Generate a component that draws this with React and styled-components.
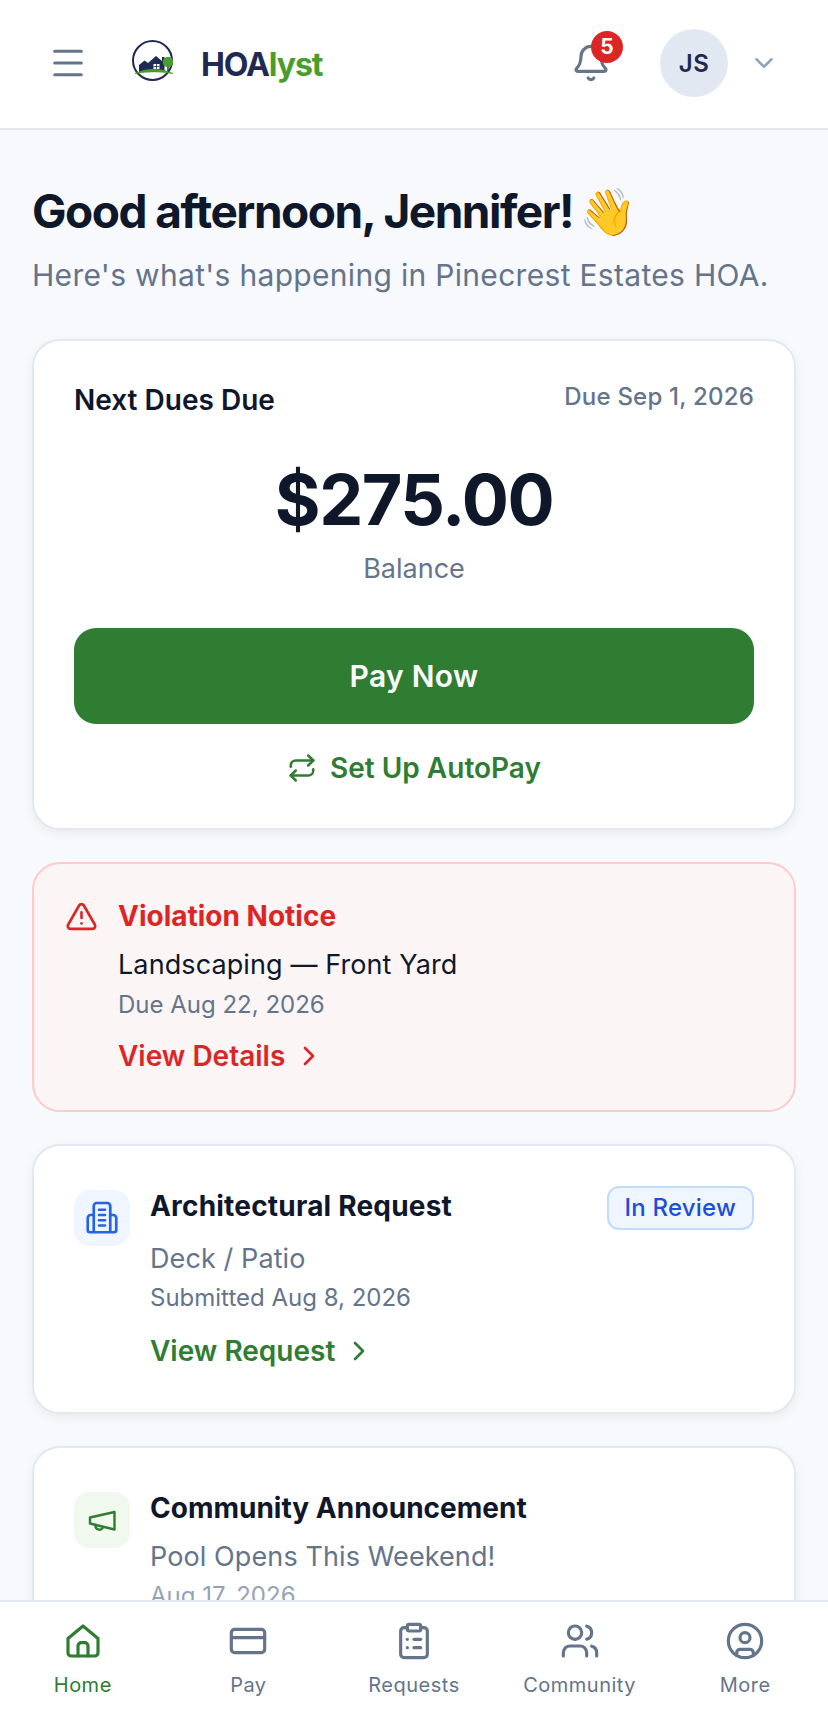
import React from 'react';
import styled, { createGlobalStyle } from 'styled-components';
import { Menu, Bell, ChevronDown, ChevronRight, Repeat, TriangleAlert, CreditCard, ClipboardList, Users, CircleUser } from 'lucide-react';

const navy = '#1e2a52';
const ink = '#0f172a';
const slate = '#64748b';
const green = '#2e7d32';
const red = '#dc2626';

const GlobalStyle = createGlobalStyle`
  html, body { margin: 0; padding: 0; height: 100%; }
  body { font-family: Inter, "Noto Sans", sans-serif; background: #f8f9fc; color: ${ink}; }
  * { box-sizing: border-box; }
`;

const Screen = styled.div`
  display: flex;
  flex-direction: column;
  height: 1720px;
  overflow: hidden;
`;

const Header = styled.header`
  flex: none;
  display: flex;
  align-items: center;
  height: 130px;
  padding: 0 49px 2px 48px;
  background: #fff;
  border-bottom: 2px solid #e2e8f0;
  color: ${slate};
`;

const LogoMark = styled.svg`
  width: 44px;
  height: 44px;
  margin-left: 42px;
  margin-top: -4px;
`;

const Brand = styled.div`
  margin-left: 27px;
  margin-top: 2px;
  font-size: 32px;
  font-weight: 700;
  letter-spacing: -1.1px;
  color: ${navy};
  span { color: #4a9d2a; }
`;

const Spacer = styled.div`
  flex: 1;
`;

const BellWrap = styled.div`
  position: relative;
  display: flex;
  margin-right: 49px;
`;

const Badge = styled.div`
  position: absolute;
  top: -12px;
  right: -12px;
  width: 32px;
  height: 32px;
  border-radius: 50%;
  background: ${red};
  color: #fff;
  font-size: 21px;
  font-weight: 700;
  line-height: 32px;
  text-align: center;
`;

const Avatar = styled.div`
  display: flex;
  align-items: center;
  justify-content: center;
  width: 68px;
  height: 68px;
  border-radius: 50%;
  background: #e2e8f2;
  color: ${navy};
  font-size: 24px;
  font-weight: 600;
  letter-spacing: 0.5px;
`;

const Caret = styled(ChevronDown)`
  margin-left: 21px;
  color: #94a3b8;
`;

const Main = styled.main`
  flex: 1;
  min-height: 0;
  overflow: hidden;
  padding: 53px 32px 0;
`;

const Greeting = styled.h1`
  display: flex;
  align-items: center;
  margin: 0;
  font-size: 46px;
  font-weight: 700;
  line-height: 56px;
  letter-spacing: -1.5px;
  color: ${ink};
`;

const Wave = styled.span`
  margin-left: 6px;
  font-size: 46px;
  letter-spacing: 0;
`;

const Subtitle = styled.p`
  margin: 16px 0 44px;
  font-size: 30px;
  line-height: 40px;
  letter-spacing: 0.31px;
  color: ${slate};
`;

const Stack = styled.div`
  display: flex;
  flex-direction: column;
  gap: 32px;
`;

const Card = styled.section`
  display: ${p => (p.$row ? 'flex' : 'block')};
  padding: ${p => (p.$row ? 41 : 40)}px 40px ${p => p.$bottom || 40}px;
  background: #fff;
  border: 2px solid #e2e8f0;
  border-radius: 28px;
  box-shadow: 0 4px 12px rgba(15, 23, 42, 0.06);
`;

const DuesTop = styled.div`
  display: flex;
  justify-content: space-between;
  align-items: flex-start;
`;

const DuesLabel = styled.div`
  font-size: 28px;
  font-weight: 600;
  line-height: 38px;
`;

const DuesDate = styled.div`
  font-size: 24px;
  font-weight: 500;
  line-height: 32px;
  letter-spacing: 0.2px;
  color: ${slate};
`;

const Amount = styled.div`
  margin-top: 38px;
  font-size: 70px;
  font-weight: 700;
  line-height: 86px;
  letter-spacing: -1.5px;
  text-align: center;
`;

const AmountNote = styled.div`
  margin-top: 9px;
  font-size: 27px;
  line-height: 34px;
  text-align: center;
  color: ${slate};
`;

const PayButton = styled.button`
  display: block;
  width: 100%;
  height: 96px;
  margin-top: 42px;
  border: 0;
  border-radius: 22px;
  background: ${green};
  color: #fff;
  font-family: inherit;
  font-size: 30px;
  font-weight: 600;
  letter-spacing: 0.3px;
`;

const AutoPay = styled.div`
  display: flex;
  align-items: center;
  justify-content: center;
  gap: 13px;
  margin-top: 24px;
  font-size: 28px;
  font-weight: 600;
  line-height: 40px;
  color: ${green};
`;

const Alert = styled.section`
  display: flex;
  gap: 20px;
  padding: 33px 31px 35px;
  background: #fcf5f6;
  border: 2px solid #fecaca;
  border-radius: 28px;
`;

const AlertIcon = styled(TriangleAlert)`
  flex: none;
  margin-top: 3px;
  color: ${red};
`;

const Body = styled.div`
  flex: 1;
  min-width: 0;
`;

const TitleRow = styled.div`
  display: flex;
  justify-content: space-between;
  align-items: flex-start;
`;

const Title = styled.div`
  font-size: 28px;
  font-weight: 700;
  line-height: 38px;
  letter-spacing: ${p => p.$track || 0}px;
  color: ${p => p.$color || ink};
`;

const Primary = styled.div`
  margin-top: ${p => p.$top}px;
  font-size: 27px;
  line-height: 38px;
  letter-spacing: 0.1px;
  color: ${p => p.$color || slate};
`;

const Meta = styled.div`
  margin-top: ${p => p.$top || 5}px;
  font-size: 24px;
  line-height: 30px;
  color: ${p => p.$color || slate};
`;

const ActionLink = styled.div`
  display: flex;
  align-items: center;
  gap: 8px;
  margin-top: ${p => p.$top || 19}px;
  font-size: 28px;
  font-weight: 600;
  line-height: 38px;
  color: ${p => p.$color};
`;

const IconBox = styled.div`
  flex: none;
  display: flex;
  align-items: center;
  justify-content: center;
  width: 56px;
  height: 56px;
  margin: 3px 20px 0 0;
  border-radius: 16px;
  background: ${p => p.$bg};
  color: ${p => p.$color};
`;

const StatusBadge = styled.div`
  margin: -1px 0 -5px;
  padding: 0 16px;
  height: 44px;
  border: 2px solid #bfdbfe;
  border-radius: 12px;
  background: #eff6ff;
  color: #1d4ed8;
  font-size: 24px;
  font-weight: 500;
  line-height: 40px;
  letter-spacing: 0.2px;
`;

const BottomNav = styled.nav`
  flex: none;
  display: grid;
  grid-template-columns: repeat(5, 1fr);
  height: 120px;
  padding-top: 19px;
  background: #fff;
  border-top: 2px solid #e2e8f0;
`;

const NavItem = styled.div`
  display: flex;
  flex-direction: column;
  align-items: center;
  gap: 11px;
  font-size: 20px;
  font-weight: 400;
  line-height: 26px;
  letter-spacing: 0.5px;
  color: ${p => (p.$active ? green : slate)};
`;

function Logo() {
  return (
    <LogoMark viewBox="0 0 44 44">
      <circle cx="22.5" cy="21.5" r="19.5" fill="none" stroke={navy} strokeWidth="2" />
      <path d="M9 33V26l5.500-4.500L18 24l8-7 6 5v-4h2.500v15z" fill={navy} />
      <rect x="23.5" y="25" width="6" height="5" fill="#fff" />
      <path d="M26.500 25v5M23.500 27.500h6" stroke={navy} strokeWidth="0.8" />
      <path d="M38 26v7" stroke={navy} strokeWidth="1.4" />
      <circle cx="38" cy="23" r="5.200" fill="#4a9d2a" />
      <path d="M5 34.500Q24 26 43 34.500 24 31 5 34.500z" fill="#4a9d2a" stroke="#4a9d2a" strokeWidth="0.8" strokeLinejoin="round" />
    </LogoMark>
  );
}

function HouseIcon() {
  return (
    <svg width="40" height="40" viewBox="0 0 24 24" fill="none" stroke="currentColor" strokeWidth="1.9" strokeLinecap="round" strokeLinejoin="round">
      <path d="M3 10.500 12 3l9 7.500V19a2 2 0 0 1-2 2H5a2 2 0 0 1-2-2z" />
      <path d="M9 21v-6a2 2 0 0 1 2-2h2a2 2 0 0 1 2 2v6" />
    </svg>
  );
}

function BuildingIcon() {
  return (
    <svg width="36" height="36" viewBox="0 0 24 24" fill="none" stroke="currentColor" strokeWidth="1.8" strokeLinecap="round" strokeLinejoin="round">
      <path d="M6.500 20.500V4a2 2 0 0 1 2-2h7a2 2 0 0 1 2 2v16.500" />
      <path d="M6.500 10H4.500A2 2 0 0 0 2.500 12v8a1.500 1.500 0 0 0 1.500 1.500h16a1.500 1.500 0 0 0 1.500-1.500v-8a2 2 0 0 0-2-2h-2" />
      <path d="M10 6.500h4M10 10h4M10 13.500h4M10 17h4" />
    </svg>
  );
}

function MegaphoneIcon() {
  return (
    <svg width="32" height="32" viewBox="0 0 32 32" fill="none" stroke="currentColor" strokeWidth="2.4" strokeLinecap="round" strokeLinejoin="round">
      <path d="M4 13.500 28.500 8v17.500L4 19.500z" />
      <path d="M9.500 21a4 4 0 0 0 7.500 2.500" />
    </svg>
  );
}

const navItems = [
  { label: 'Home', icon: <HouseIcon />, active: true },
  { label: 'Pay', icon: <CreditCard size={40} strokeWidth={1.9} /> },
  { label: 'Requests', icon: <ClipboardList size={40} strokeWidth={1.9} /> },
  { label: 'Community', icon: <Users size={40} strokeWidth={1.9} /> },
  { label: 'More', icon: <CircleUser size={40} strokeWidth={1.9} /> },
];

export default function App() {
  return (
    <>
      <GlobalStyle />
      <Screen>
        <Header>
          <Menu size={40} strokeWidth={1.8} />
          <Logo />
          <Brand>HOA<span>lyst</span></Brand>
          <Spacer />
          <BellWrap>
            <Bell size={40} strokeWidth={1.9} />
            <Badge>5</Badge>
          </BellWrap>
          <Avatar>JS</Avatar>
          <Caret size={30} strokeWidth={2} />
        </Header>
        <Main>
          <Greeting>Good afternoon, Jennifer!<Wave>👋</Wave></Greeting>
          <Subtitle>Here's what's happening in Pinecrest Estates HOA.</Subtitle>
          <Stack>
            <Card>
              <DuesTop>
                <DuesLabel>Next Dues Due</DuesLabel>
                <DuesDate>Due Sep 1, 2026</DuesDate>
              </DuesTop>
              <Amount>$275.00</Amount>
              <AmountNote>Balance</AmountNote>
              <PayButton>Pay Now</PayButton>
              <AutoPay><Repeat size={30} strokeWidth={2} />Set Up AutoPay</AutoPay>
            </Card>
            <Alert>
              <AlertIcon size={33} strokeWidth={1.9} />
              <Body>
                <Title $color={red}>Violation Notice</Title>
                <Primary $top={11} $color={ink}>Landscaping — Front Yard</Primary>
                <Meta $top={6}>Due Aug 22, 2026</Meta>
                <ActionLink $top={17} $color={red}>View Details<ChevronRight size={32} strokeWidth={2} /></ActionLink>
              </Body>
            </Alert>
            <Card $row $bottom={42}>
              <IconBox $bg="#eff6ff" $color="#2563eb"><BuildingIcon /></IconBox>
              <Body>
                <TitleRow>
                  <Title $track={0.2}>Architectural Request</Title>
                  <StatusBadge>In Review</StatusBadge>
                </TitleRow>
                <Primary $top={15}>Deck / Patio</Primary>
                <Meta>Submitted Aug 8, 2026</Meta>
                <ActionLink $color={green}>View Request<ChevronRight size={32} strokeWidth={2} /></ActionLink>
              </Body>
            </Card>
            <Card $row>
              <IconBox $bg="#f1f8ee" $color={green}><MegaphoneIcon /></IconBox>
              <Body>
                <Title>Community Announcement</Title>
                <Primary $top={11}>Pool Opens This Weekend!</Primary>
                <Meta $color="#94a3b8">Aug 17, 2026</Meta>
              </Body>
            </Card>
          </Stack>
        </Main>
        <BottomNav>
          {navItems.map(item => (
            <NavItem key={item.label} $active={item.active}>
              {item.icon}
              {item.label}
            </NavItem>
          ))}
        </BottomNav>
      </Screen>
    </>
  );
}
